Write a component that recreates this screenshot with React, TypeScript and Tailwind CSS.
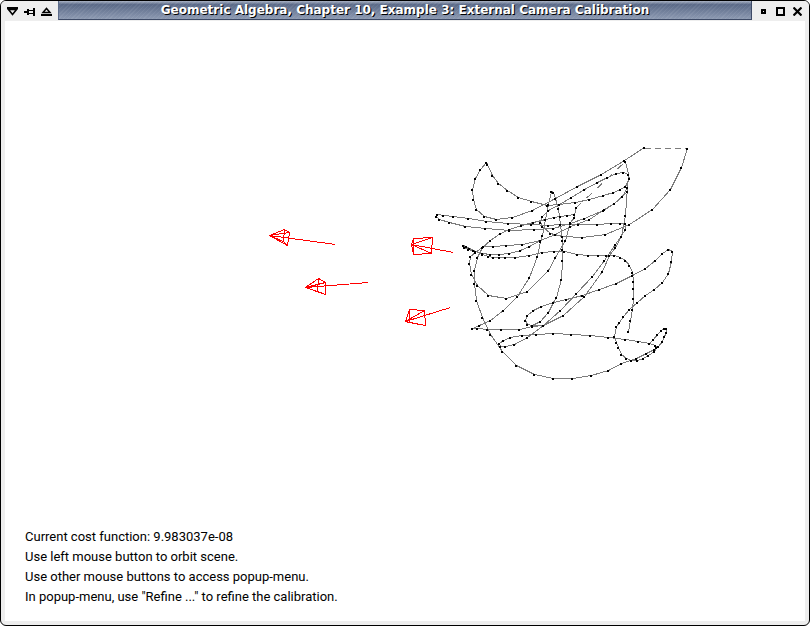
type Point = [number, number];

const curves: Point[][] = [
  [
    [644, 148], [624, 161], [601, 175], [577, 187], [555, 199], [532, 211], [512, 218], [496, 220],
    [484, 217], [476, 210], [473, 200], [472, 190], [475, 179], [480, 170], [486, 163], [487, 165],
    [492, 176], [498, 184], [507, 191], [518, 198], [531, 202], [547, 206], [559, 205], [575, 203],
    [589, 200], [603, 196], [613, 193], [620, 190], [625, 187], [629, 179], [628, 175], [623, 173],
    [616, 174], [607, 178], [597, 183], [584, 190], [571, 198], [559, 205], [548, 211], [542, 217],
    [540, 223], [542, 227], [550, 234], [562, 237], [582, 238], [605, 235], [629, 225], [652, 210],
    [670, 190], [681, 168], [687, 149],
  ],
  [
    [625, 162], [628, 175], [627, 188], [625, 216], [621, 237], [615, 248], [609, 256], [602, 272],
    [584, 297], [563, 316], [543, 326], [532, 326], [527, 325], [525, 321], [527, 316], [533, 311],
    [541, 307], [553, 303], [566, 300], [582, 296], [599, 290], [616, 284], [632, 276], [645, 269],
    [655, 261], [662, 254], [668, 250], [672, 252], [671, 262], [668, 274], [662, 283], [654, 290],
    [645, 296], [637, 303], [629, 310], [623, 317], [619, 323], [616, 327], [614, 337], [616, 343],
    [618, 348], [621, 355], [626, 359], [631, 361], [637, 361], [643, 359], [648, 356], [654, 352],
    [656, 348], [655, 346], [649, 344], [638, 342], [625, 340], [608, 338], [590, 336], [571, 335],
    [553, 334], [536, 335], [522, 336], [510, 338], [503, 341], [499, 344], [500, 347], [505, 347],
    [514, 345], [527, 338], [543, 326], [560, 311], [576, 294], [592, 277], [604, 261], [615, 245],
    [625, 230], [625, 224], [620, 224], [611, 224], [597, 225], [578, 225], [560, 225], [548, 226],
    [531, 225], [508, 224], [486, 222], [468, 219], [453, 217], [443, 216], [437, 215], [436, 217],
    [439, 220], [449, 223], [465, 227], [485, 229], [509, 231], [534, 230], [553, 229], [570, 224],
    [584, 219], [603, 211], [614, 204], [622, 197], [627, 188],
  ],
  [
    [627, 192], [614, 204], [604, 210], [589, 220], [570, 227], [555, 235], [540, 241], [529, 247],
    [520, 251], [509, 254], [499, 255], [490, 255], [482, 254], [473, 251], [469, 249], [466, 247],
    [463, 246], [464, 248], [468, 250], [475, 252], [482, 255], [488, 257], [493, 258], [499, 258],
    [505, 258], [515, 258], [529, 256], [542, 253], [554, 252], [564, 252], [577, 255], [588, 256],
    [598, 256], [606, 256], [614, 256], [620, 258], [625, 261], [629, 266], [632, 273], [633, 282],
    [633, 289], [633, 299], [632, 310], [630, 321], [628, 332],
  ],
  [
    [555, 235], [540, 241], [522, 245], [506, 246], [493, 247], [483, 247], [475, 253], [470, 257],
    [469, 264], [471, 275], [477, 286], [488, 296], [506, 299], [527, 292], [548, 271], [555, 258],
    [565, 241], [570, 223], [574, 218], [574, 215], [567, 216], [560, 217], [554, 218], [545, 220],
    [533, 223], [521, 226], [509, 230], [500, 234], [490, 241], [482, 248], [477, 258], [474, 271],
    [474, 284], [476, 301], [482, 318], [490, 335], [502, 352], [516, 366], [534, 375], [553, 379],
    [572, 379], [591, 376], [608, 371], [621, 364], [636, 359], [646, 354], [654, 350], [658, 347],
    [662, 342], [664, 337], [666, 333], [666, 329], [664, 329], [661, 331], [657, 335], [653, 340],
    [649, 344],
  ],
  [
    [532, 326], [540, 322], [548, 313], [553, 303], [556, 298], [561, 280], [562, 261], [562, 250],
    [562, 241], [560, 225], [558, 209], [553, 193], [551, 192], [548, 205], [545, 220], [542, 236],
    [540, 242], [537, 257], [529, 278], [517, 297], [503, 311], [490, 321], [479, 326], [472, 329],
    [477, 329], [487, 330], [501, 330], [519, 330], [532, 327], [543, 326],
  ],
  [[574, 215], [576, 208]],
];

type Camera = { apex: Point; frame: Point[]; target: Point };

const cameras: Camera[] = [
  { apex: [269, 235], frame: [[284, 229], [289, 232], [287, 245], [283, 241]], target: [335, 244] },
  { apex: [305, 287], frame: [[318, 278], [325, 282], [325, 294], [317, 291]], target: [368, 282] },
  { apex: [411, 244], frame: [[413, 238], [432, 237], [431, 253], [413, 254]], target: [453, 252] },
  { apex: [405, 321], frame: [[409, 309], [424, 310], [425, 325], [409, 322]], target: [450, 307] },
];

const messages = [
  "Current cost function: 9.983037e-08",
  "Use left mouse button to orbit scene.",
  "Use other mouse buttons to access popup-menu.",
  'In popup-menu, use "Refine ..." to refine the calibration.',
];

const toPoints = (points: Point[]) => points.map((p) => p.join(",")).join(" ");

function Scene() {
  return (
    <svg viewBox="5 21 800 480" className="block h-auto w-full" role="img" aria-label="Calibration scene">
      <g fill="none" strokeWidth="1" shapeRendering="crispEdges">
        <g stroke="#7c7c7c" transform="translate(0.5 -0.5)">
          {curves.map((curve, i) => (
            <polyline key={i} points={toPoints(curve)} />
          ))}
          <path d="M644 149H687" strokeDasharray="6 4" />
          <path d="M576 208L625 162" strokeDasharray="7 7" />
        </g>
        <g stroke="#ff0000" transform="translate(0.5 0.5)">
          {cameras.map(({ apex, frame, target }, i) => (
            <g key={i}>
              <polygon points={toPoints(frame)} />
              {frame.map((corner, j) => (
                <polyline key={j} points={toPoints([apex, corner])} />
              ))}
              <polyline points={toPoints([apex, target])} />
            </g>
          ))}
        </g>
      </g>
      <g fill="#000000" shapeRendering="crispEdges">
        {curves.flat().map(([x, y], i) => (
          <rect key={i} x={x - 1} y={y - 1} width="2" height="2" />
        ))}
      </g>
    </svg>
  );
}

const buttonClass = "flex h-4 w-4 items-center justify-center";

function TitleBar() {
  return (
    <header className="flex h-5 shrink-0 bg-[#eeeeee]">
      <div className="flex w-[57px] items-center gap-px pt-px pl-[3px]">
        <button type="button" aria-label="Window menu" className={buttonClass}>
          <svg width="11" height="9" viewBox="0 0 11 9">
            <path d="M0 0H11V2H0Z" shapeRendering="crispEdges" />
            <path d="M1.500 2.500H9.500L5.500 7.500Z" fill="none" stroke="#000" strokeWidth="1.600" />
          </svg>
        </button>
        <button type="button" aria-label="Stick window" className={buttonClass}>
          <svg width="11" height="8" viewBox="0 0 11 8" shapeRendering="crispEdges">
            <path d="M0 3H4V5H0ZM3 1H5V7H3ZM5 2H9V3H5ZM5 5H9V6H5ZM9 0H11V8H9Z" />
          </svg>
        </button>
        <button type="button" aria-label="Shade window" className={buttonClass}>
          <svg width="11" height="9" viewBox="0 0 11 9">
            <path d="M0 7H11V9H0Z" shapeRendering="crispEdges" />
            <path d="M2 5.500H9L5.500 1.500Z" fill="none" stroke="#000" strokeWidth="1.500" />
          </svg>
        </button>
      </div>
      <div className="mb-px min-w-0 flex-1 border-r border-b border-l border-[#3d4a66] border-l-[#5c6b8a] bg-linear-to-b from-[#a9b2c4] via-[#5b6a88] via-20% to-[#8d9ab2]">
        <h1 className="truncate bg-[repeating-linear-gradient(135deg,#ffffff10_0px,#ffffff10_1px,#00000000_1px,#00000000_3px)] pt-px text-center font-['DejaVu_Sans',sans-serif] text-[12px] leading-[17px] font-bold text-white [text-shadow:1px_1px_0_#000]">
          Geometric Algebra, Chapter 10, Example 3: External Camera Calibration
        </h1>
      </div>
      <div className="flex w-[57px] items-center gap-px pt-px pl-[3px]">
        <button type="button" aria-label="Minimize" className={buttonClass}>
          <svg width="5" height="5" viewBox="0 0 5 5" shapeRendering="crispEdges">
            <path d="M0 0H5V5H0ZM2 2V3H3V2Z" fillRule="evenodd" />
          </svg>
        </button>
        <button type="button" aria-label="Maximize" className={buttonClass}>
          <svg width="9" height="9" viewBox="0 0 9 9" shapeRendering="crispEdges">
            <path d="M0 0H9V9H0ZM2 2V7H7V2Z" fillRule="evenodd" />
          </svg>
        </button>
        <button type="button" aria-label="Close" className={buttonClass}>
          <svg width="9" height="9" viewBox="0 0 9 9">
            <path d="M0.500 0.500L8.500 8.500M8.500 0.500L0.500 8.500" stroke="#000" strokeWidth="2.200" />
          </svg>
        </button>
      </div>
    </header>
  );
}

export default function App() {
  return (
    <div className="min-h-screen bg-white">
      <div className="flex min-h-screen flex-col overflow-hidden rounded-md border border-black bg-[#eeeeee]">
        <TitleBar />
        <main className="mx-1 mb-1 flex flex-1 flex-col bg-white">
          <Scene />
          <div className="mt-auto px-5 pb-3.5 font-[Roboto,Arial,sans-serif] text-[13px] leading-5 text-black">
            {messages.map((message) => (
              <p key={message}>{message}</p>
            ))}
          </div>
        </main>
      </div>
    </div>
  );
}
